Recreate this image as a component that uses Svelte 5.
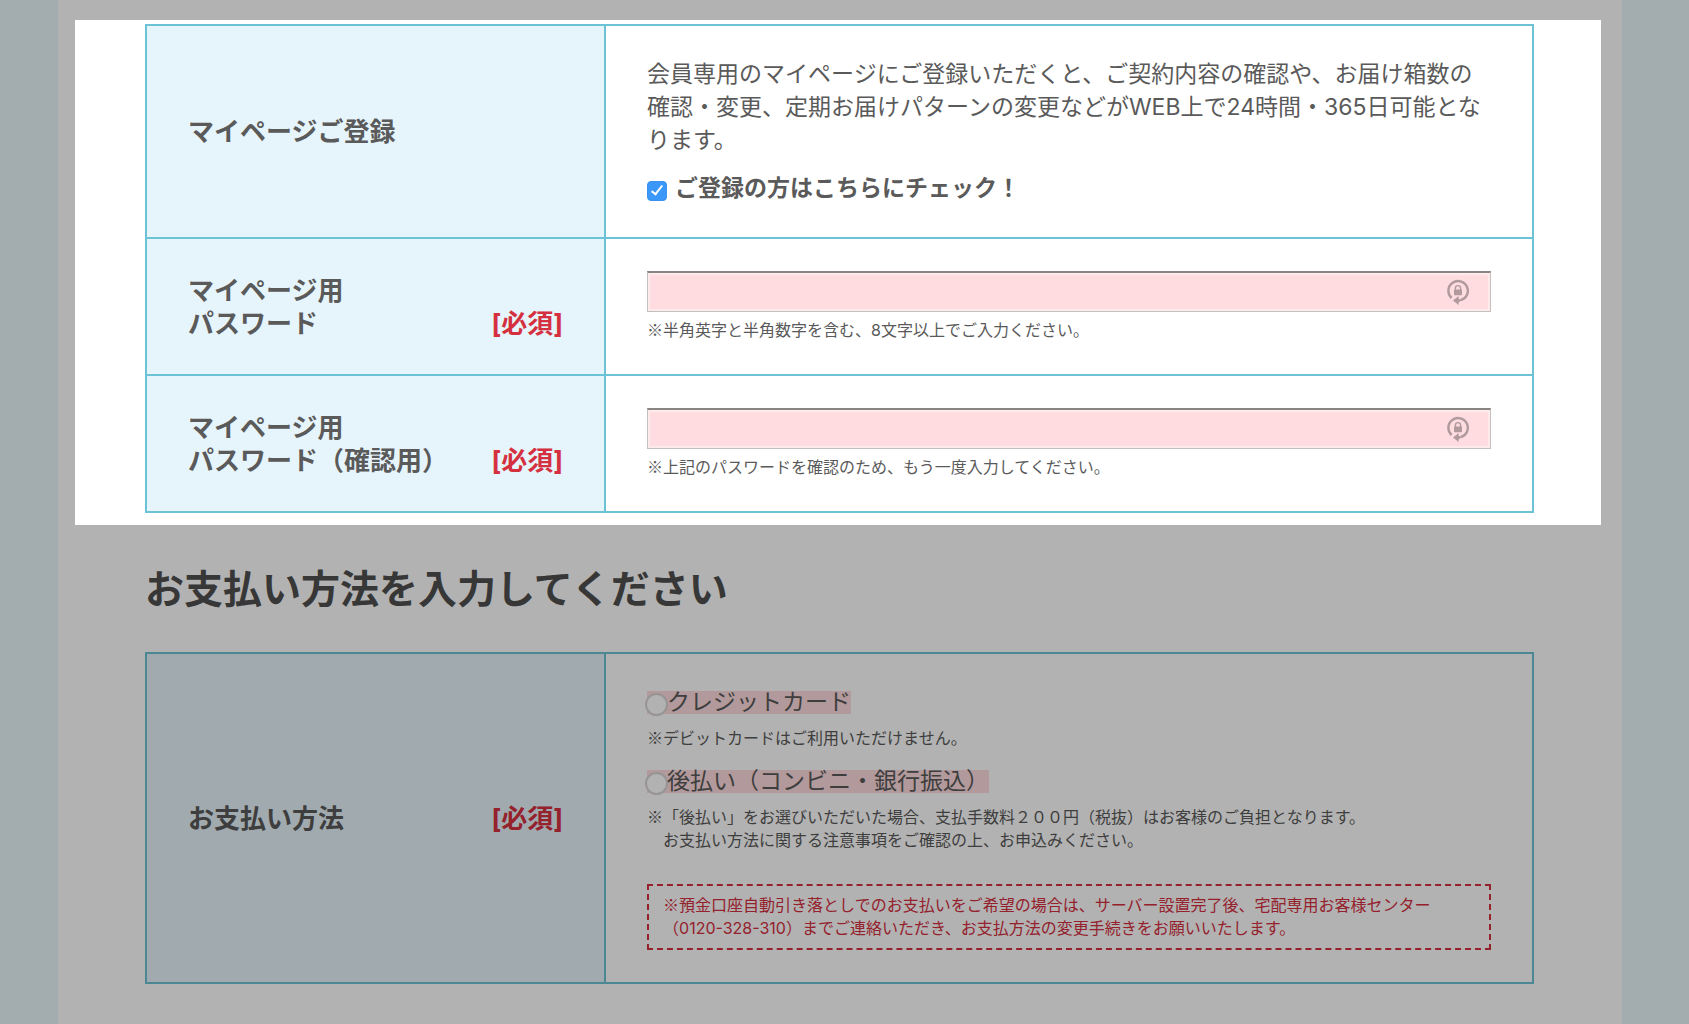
<script lang="ts">
  let register = $state(true);
  let payment = $state('');

  let passwords = $state([
    {
      id: 'password',
      label: 'パスワード',
      note: '半角英字と半角数字を含む、8文字以上でご入力ください。',
      value: ''
    },
    {
      id: 'password-confirm',
      label: 'パスワード（確認用）',
      note: '上記のパスワードを確認のため、もう一度入力してください。',
      value: ''
    }
  ]);
</script>

<main class="sheet">
  <section class="spotlight">
    <table class="form-table">
      <tbody>
        <tr>
          <th scope="row">マイページご登録</th>
          <td>
            <p class="lead">
              会員専用のマイページにご登録いただくと、ご契約内容の確認や、お届け箱数の<br />
              確認・変更、定期お届けパターンの変更などがWEB上で24時間・365日可能とな<br />
              ります。
            </p>
            <label class="check">
              <input type="checkbox" bind:checked={register} />
              <span>ご登録の方はこちらにチェック！</span>
            </label>
          </td>
        </tr>
        {#each passwords as field (field.id)}
          <tr>
            <th scope="row">
              <div class="heading">
                <label for={field.id}>マイページ用<br />{field.label}</label>
                <span class="required">[必須]</span>
              </div>
            </th>
            <td>
              <div class="password">
                <input
                  id={field.id}
                  type="password"
                  aria-describedby="{field.id}-note"
                  bind:value={field.value}
                />
                <svg class="key-icon" viewBox="0 0 22 26" aria-hidden="true">
                  <path
                    d="M4.6 19A9.7 9.7 0 1 1 13.5 21.2"
                    fill="none"
                    stroke="currentColor"
                    stroke-width="2.4"
                  />
                  <path d="M6 21.6l5.6-4.6v2.6l2.6 2-2.6 2V26z" fill="currentColor" />
                  <path
                    d="M8.4 11V9.2a2.6 2.6 0 0 1 5.2 0V11"
                    fill="none"
                    stroke="currentColor"
                    stroke-width="1.4"
                  />
                  <rect x="7" y="10.6" width="8" height="5.6" rx="0.6" fill="currentColor" />
                </svg>
              </div>
              <p class="note" id="{field.id}-note"><span class="mark">※</span>{field.note}</p>
            </td>
          </tr>
        {/each}
      </tbody>
    </table>
  </section>

  <section class="payment">
    <h2>お支払い方法を入力してください</h2>
    <table class="form-table">
      <tbody>
        <tr>
          <th scope="row">
            <div class="heading">
              <span>お支払い方法</span>
              <span class="required">[必須]</span>
            </div>
          </th>
          <td>
            <div class="option">
              <label class="radio">
                <input type="radio" name="payment" value="card" bind:group={payment} />
                <span>クレジットカード</span>
              </label>
              <p class="note"><span class="mark">※</span>デビットカードはご利用いただけません。</p>
            </div>
            <div class="option">
              <label class="radio">
                <input type="radio" name="payment" value="deferred" bind:group={payment} />
                <span>後払い（コンビニ・銀行振込）</span>
              </label>
              <p class="note">
                <span class="mark">※</span>「後払い」をお選びいただいた場合、支払手数料２００円（税抜）はお客様のご負担となります。<br />
                　お支払い方法に関する注意事項をご確認の上、お申込みください。
              </p>
            </div>
            <p class="note notice">
              <span class="mark">※</span>預金口座自動引き落としでのお支払いをご希望の場合は、サーバー設置完了後、宅配専用お客様センター<br />
              （0120-328-310）までご連絡いただき、お支払方法の変更手続きをお願いいたします。
            </p>
          </td>
        </tr>
      </tbody>
    </table>
  </section>
</main>

<style>
  :global(body) {
    background: #eaf6fb;
    color: #5a5a5a;
    font-family: Inter, 'Noto Sans CJK JP', sans-serif;
    font-size: 23px;
    line-height: 33px;
  }

  .sheet {
    box-sizing: border-box;
    min-height: 100vh;
    margin: 0 67px 0 58px;
    padding-top: 20px;
    background: #fff;
  }

  /* Everything around the highlighted block is dimmed by its shadow */
  .spotlight {
    position: relative;
    z-index: 1;
    margin: 0 21px 0 17px;
    padding: 4px 67px 12px 70px;
    box-shadow: 0 0 0 9999px rgba(0, 0, 0, 0.3);
  }

  .payment {
    padding: 37px 88px 40px 87px;
  }

  h2 {
    margin: 0 0 37px;
    color: #4f4f4f;
    font-size: 39px;
    font-weight: 700;
    line-height: 53px;
  }

  p {
    margin: 0;
  }

  .form-table {
    width: 100%;
    border-collapse: collapse;
    table-layout: fixed;
  }

  th,
  td {
    padding: 32px 41px;
    border: 2px solid #6cc3d5;
    text-align: left;
    vertical-align: middle;
  }

  th {
    width: 33.1%;
    box-sizing: border-box;
    background: #e6f4fb;
    font-size: 26px;
    font-weight: 700;
  }

  .heading {
    display: flex;
    justify-content: space-between;
    align-items: flex-end;
    white-space: nowrap;
  }

  .required {
    color: #d5303f;
  }

  .lead {
    margin-bottom: 15px;
  }

  .check {
    display: flex;
    align-items: center;
    gap: 8px;
    font-weight: 700;
  }

  .check input {
    display: grid;
    place-items: center;
    appearance: none;
    width: 20px;
    height: 20px;
    margin: 4px 0 0;
    border: 1px solid #b5b5b5;
    border-radius: 4px;
    background: #fff;
  }

  .check input:checked {
    border-color: #3a92f0;
    background: #3b97f8;
  }

  .check input:checked::after {
    content: '';
    width: 4px;
    height: 10px;
    margin-bottom: 3px;
    border: solid #fff;
    border-width: 0 2px 2px 0;
    transform: rotate(38deg);
  }

  .password {
    position: relative;
    margin-bottom: 7px;
  }

  .password input {
    display: block;
    box-sizing: border-box;
    width: 100%;
    height: 41px;
    padding: 0 56px 0 8px;
    border: 1px solid #c4c0c0;
    border-top: 2px solid #8a8482;
    border-radius: 0;
    background: #ffdcdf;
    box-shadow: inset 0 0 0 2px #fdebec;
    font: inherit;
  }

  .key-icon {
    position: absolute;
    top: 8px;
    right: 22px;
    width: 22px;
    height: 26px;
    color: #b09a9e;
  }

  .note {
    font-size: 16px;
    line-height: 23px;
  }

  /* Inter has its own small reference mark, the full-width one is needed */
  .mark {
    font-family: 'Noto Sans CJK JP', sans-serif;
    line-height: 1;
  }

  .option {
    display: flow-root;
    margin-bottom: 15px;
  }

  .radio {
    display: flex;
    align-items: center;
    width: fit-content;
    margin: 5px 0 13px;
    background: #ffdcdf;
    line-height: 23px;
  }

  .radio input {
    appearance: none;
    box-sizing: border-box;
    width: 23px;
    height: 23px;
    margin: 2px -1px -2px -2px;
    border: 2px solid #d9d4d4;
    border-radius: 50%;
    background: #fff;
  }

  .radio input:checked {
    border: 7px solid #3b97f8;
  }

  .notice {
    margin-top: 32px;
    padding: 8px 14px;
    border: 2px dashed #d5303f;
    color: #d5303f;
  }
</style>
